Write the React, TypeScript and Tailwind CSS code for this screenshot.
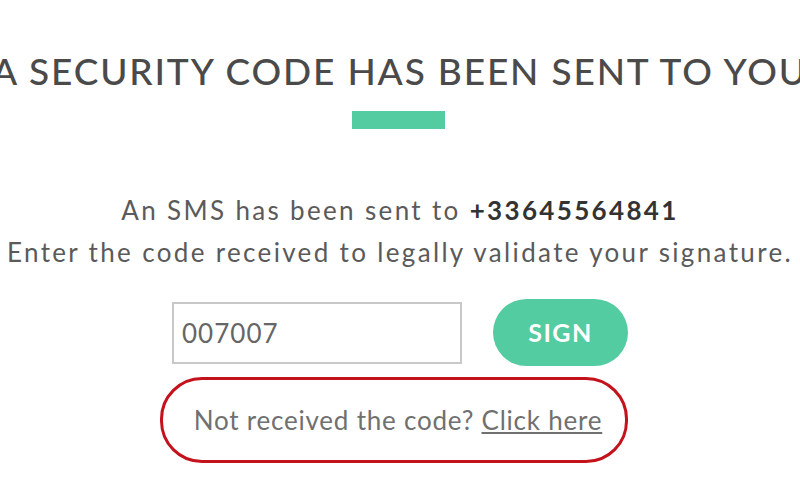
export default function App() {
  return (
    <div className="flex h-[500px] w-[800px] flex-col items-center overflow-hidden bg-white font-['Lato',sans-serif] text-[#555]">
      <div className="mt-[50px] flex w-full justify-center">
        <h1 className="whitespace-nowrap text-[37px] font-medium leading-[42px] tracking-[0.05em] text-[#4a4a4a]">
          A SECURITY CODE HAS BEEN SENT TO YOU
        </h1>
      </div>
      <div className="ml-[-4px] mt-[19px] h-[18px] w-[93px] bg-[#52cca0]" />

      <div className="mt-[60px] flex flex-col items-center whitespace-nowrap text-[26px] leading-[42px] tracking-[0.09em] text-[#5a5a5a]">
        <p>
          An SMS has been sent to <span className="font-bold text-[#333]">+33645564841</span>
        </p>
        <p>Enter the code received to legally validate your signature.</p>
      </div>

      <div className="mt-[26px] flex items-center gap-[31px]">
        <input
          defaultValue="007007"
          className="h-[62px] w-[290px] border-2 border-[#c8c8c8] px-[8px] text-[26px] tracking-[0.04em] text-[#666] outline-none"
        />
        <button className="h-[67px] w-[135px] rounded-full bg-[#52cca0] text-[25px] font-bold tracking-[0.06em] text-white">
          SIGN
        </button>
      </div>

      <div className="ml-[-12px] mt-[11px] flex h-[86px] w-[468px] items-center justify-center rounded-[42px] border-[3px] border-[#c4121c] pl-[8px] text-[26px] tracking-[0.03em] text-[#707070]">
        <span>
          Not received the code? <a className="underline underline-offset-2">Click here</a>
        </span>
      </div>
    </div>
  )
}
